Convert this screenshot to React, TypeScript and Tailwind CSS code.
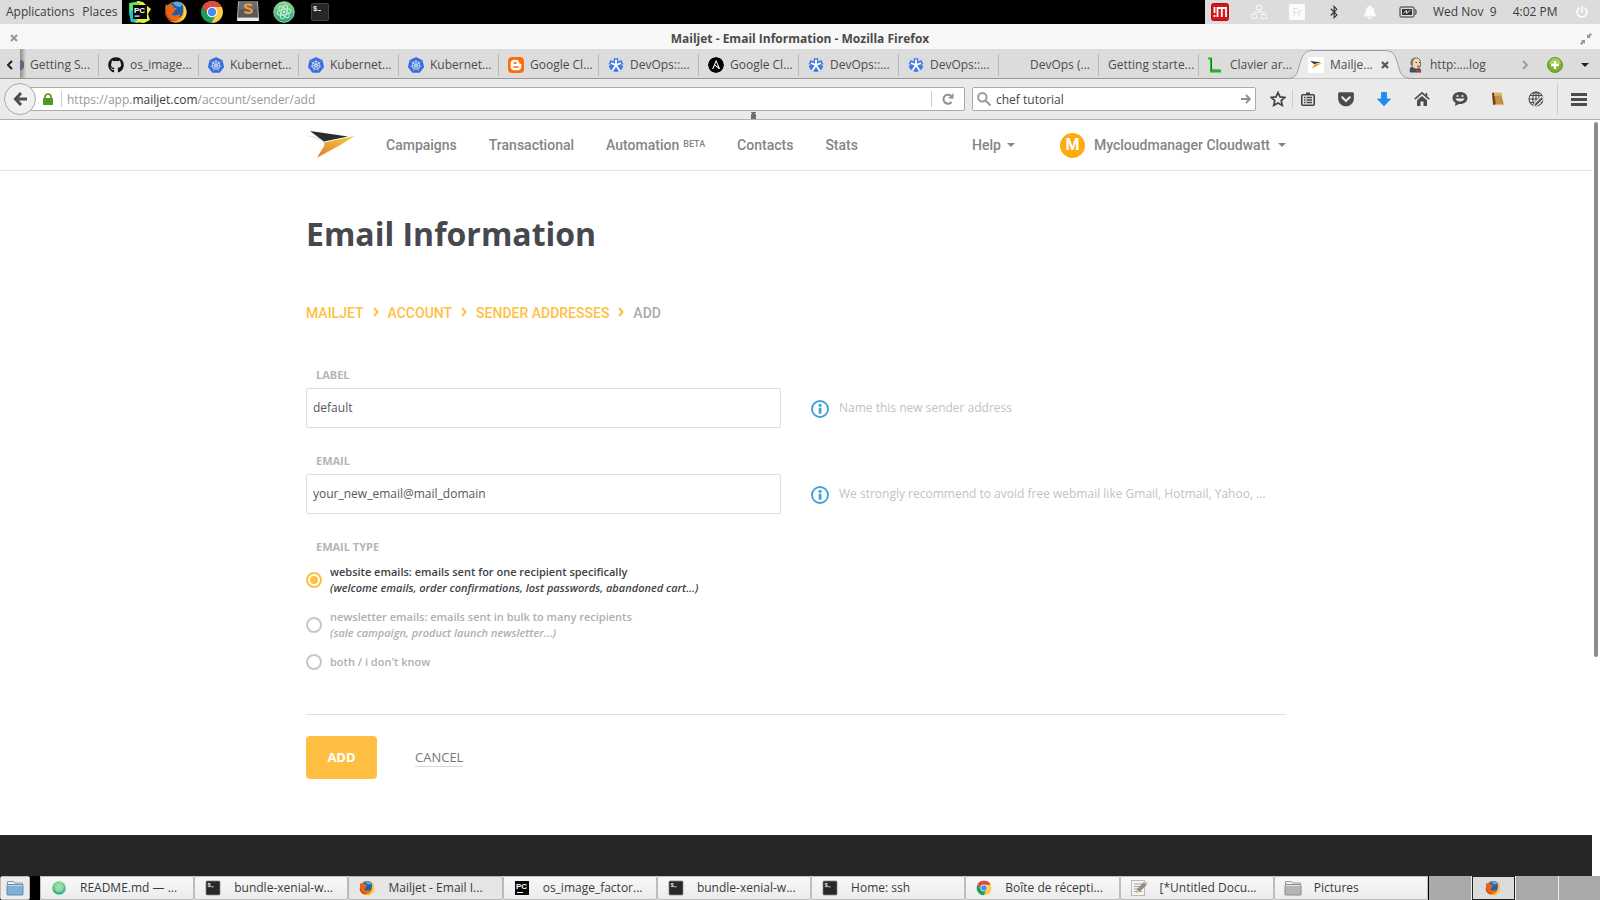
import React, { useState } from "react";
import type { ReactNode } from "react";
import { FaBell, FaBluetoothB, FaGetPocket, FaGithub, FaPowerOff } from "react-icons/fa";
import { SiAnsible, SiBlogger, SiKubernetes } from "react-icons/si";

type IconProps = { className?: string };

function PyCharmIcon({ className = "size-6" }: IconProps) {
  return (
    <svg viewBox="0 0 24 24" className={className} aria-hidden="true">
      <path d="M1 3 12 1l2 4-4 18-7-1-2-9z" fill="#21d789" />
      <path d="M9 1l6 1 3 3 5 4-3 5 2 6-6 3-9-1z" fill="#e8ee3c" />
      <path d="M1 9l5-5 3 17-6 1z" fill="#12c6c9" />
      <path d="M2 3h10l-3 5-7 3z" fill="#6be34b" />
      <rect x="5" y="5" width="14" height="14" fill="#050505" />
      <text x="6" y="13" fontSize="8" fontWeight="700" fill="#fff" fontFamily="Liberation Sans, sans-serif">PC</text>
      <rect x="6.500" y="15.500" width="5" height="1.200" fill="#fff" />
    </svg>
  );
}

function FirefoxIcon({ className = "size-6" }: IconProps) {
  return (
    <svg viewBox="0 0 24 24" className={className} aria-hidden="true">
      <circle cx="12" cy="12" r="10.500" fill="#e8701a" />
      <circle cx="13" cy="9.500" r="8" fill="#1c5fae" />
      <path d="M9 3c3-2 8-1.500 10 1l-3 3-4-1z" fill="#5aa9e0" />
      <path d="M18 3c5 3 6.500 11 2 16-4 4.500-12 5-16 0 5 3 11 1.500 13.500-2.500 2-3.500 2.500-8 .5-13.500z" fill="#fbb51c" />
      <path d="M20 6c3 5 2 12-3 15 3-4 4-9 3-15z" fill="#fde35a" />
      <path d="M2 4c1 1 2 1.500 4 1.500C8 5 9 5.500 9.500 6.500 9 7.500 11 8 12.500 8c.5 1.500-1.500 2-2.500 3 .5 2-1.500 2-2 3 1 2 4 2 6 .8 1.500-.8 3 .5 1.500 1.700-3 3-8 3-11 0C1.500 13.500.5 8.500 2 4z" fill="#e5661b" />
      <path d="M2 10c0 7 6 12 13 10-5 3-13 1-14-7z" fill="#c93716" />
    </svg>
  );
}

function ChromeIcon({ className = "size-6" }: IconProps) {
  return (
    <svg viewBox="0 0 24 24" className={className} aria-hidden="true">
      <path d="M12 12 2.470 6.500A11 11 0 0 1 21.530 6.500z" fill="#dd4b3e" />
      <path d="M12 12V7h9.800A11 11 0 0 1 11.500 23z" fill="#ffcd42" />
      <path d="M12 12l4.300 2.500L11.500 23A11 11 0 0 1 2.470 6.500L7.700 14.500z" fill="#17a05e" />
      <path d="M2.470 6.500 7.700 14.500 12 7h9.800A11 11 0 0 0 2.470 6.500z" fill="#dd4b3e" />
      <circle cx="12" cy="12" r="5.200" fill="#fff" />
      <circle cx="12" cy="12" r="4.200" fill="#4d87ed" />
    </svg>
  );
}

function SublimeIcon() {
  return (
    <svg viewBox="0 0 24 24" className="size-6" aria-hidden="true">
      <path d="M2 1.500h20l1 19H1z" fill="#c6c6c6" />
      <rect x="1" y="18" width="22" height="3" rx="1" fill="#ededed" />
      <path d="M3 1h18l1 16.500H2z" fill="#5a5a5a" />
      <path d="M3 1h18l.5 8h-19z" fill="#6c6c6c" />
      <path d="M16 5.500C13.500 4 9 4 9 6.300c0 2.500 7 1.900 7 4.500 0 2.400-4.500 2.600-7.500.9" fill="none" stroke="#f29a3c" strokeWidth="2.200" />
    </svg>
  );
}

function AtomIcon({ className = "size-6" }: IconProps) {
  return (
    <svg viewBox="0 0 24 24" className={className} aria-hidden="true">
      <defs>
        <linearGradient id="atomFill" x1="0" y1="0" x2="0" y2="1">
          <stop offset="0" stopColor="#8bd688" />
          <stop offset="1" stopColor="#1fa678" />
        </linearGradient>
      </defs>
      <circle cx="12" cy="12" r="10.300" fill="url(#atomFill)" stroke="#b9ead0" strokeWidth="0.800" />
      <g fill="none" stroke="#c4efd2" strokeWidth="1">
        <ellipse cx="12" cy="12" rx="7" ry="2.800" transform="rotate(-12 12 12)" />
        <ellipse cx="12" cy="12" rx="7" ry="2.800" transform="rotate(48 12 12)" />
        <ellipse cx="12" cy="12" rx="7" ry="2.800" transform="rotate(108 12 12)" />
      </g>
      <circle cx="12" cy="12" r="1" fill="#fff" />
    </svg>
  );
}

function TerminalIcon({ className = "size-5" }: IconProps) {
  return (
    <svg viewBox="0 0 20 20" className={className} aria-hidden="true">
      <rect x="1.500" y="1.500" width="17" height="17" rx="1" fill="#272727" stroke="#454545" />
      <text x="3" y="8.500" fontSize="7" fontWeight="700" fill="#eee" fontFamily="Liberation Mono, monospace">$</text>
      <path d="M7.500 8.500h3.500" stroke="#ddd" />
    </svg>
  );
}

function PyCharmSquare() {
  return (
    <svg viewBox="0 0 14 14" className="size-3.5" aria-hidden="true">
      <rect width="14" height="14" fill="#080808" />
      <text x="1" y="8" fontSize="8" fontWeight="700" fill="#fff" fontFamily="Liberation Sans, sans-serif">PC</text>
      <path d="M2 11.500h6" stroke="#fff" />
    </svg>
  );
}

function FolderIcon({ blue = false }: { blue?: boolean }) {
  return (
    <svg viewBox="0 0 18 16" className="h-4 w-4.5" aria-hidden="true">
      <path d="M1.500 3V1.500h6L9 3h7.500v3h-15z" fill="#eee" stroke="#999" />
      <rect x="1" y="4.500" width="16" height="10.500" rx="0.500" fill={blue ? "#7fb0d8" : "#b5b5b5"} stroke={blue ? "#5f8db5" : "#8b8b8b"} />
      <path d="M1.500 5.500h15" stroke={blue ? "#b8d6ee" : "#e2e2e2"} />
    </svg>
  );
}

function NoteIcon() {
  return (
    <svg viewBox="0 0 18 18" className="size-4.5" aria-hidden="true">
      <rect x="1.500" y="1.500" width="13" height="15" fill="#f4f4f4" stroke="#b9b9b9" />
      <path d="M4 5h8M4 7.500h6M4 10h4M4 12.500h8" stroke="#a5a5a5" />
      <path d="M6 14l1-4 7-7 3 2.500-7 7z" fill="#8d8d8d" />
      <path d="M6 14l1-3.500 2.500 2.300z" fill="#e7d56a" />
      <path d="M13.500 3.500 15 2l3 2.500-1.500 1.500z" fill="#e7b9c5" />
    </svg>
  );
}

function HelmStar() {
  return (
    <svg viewBox="0 0 16 16" className="size-4" aria-hidden="true">
      <path d="M8 1.200v13.600M1.600 5l12.800 6M14.400 5 1.600 11" stroke="#4178e8" strokeWidth="4.600" />
      <path d="M8 2.500V8M8 8 3 6.200M8 8l5-1.800M8 8l-3 4.700M8 8l3 4.700" stroke="#fff" strokeWidth="1.800" />
    </svg>
  );
}

function MailjetMark({ className }: IconProps) {
  return (
    <svg viewBox="0 0 50 30" className={className} aria-hidden="true">
      <defs>
        <linearGradient id="wing" x1="1" y1="0" x2="0.200" y2="1">
          <stop offset="0" stopColor="#f7cf35" />
          <stop offset="0.500" stopColor="#f0a936" />
          <stop offset="1" stopColor="#e07f2c" />
        </linearGradient>
      </defs>
      <path d="M0 5.500 14 7l5 5z" fill="#e6e3df" />
      <path d="M10 29 40 12 20 21z" fill="#f6d9b8" />
      <path d="M4 1 42 6.500 18 11.500z" fill="#292c2c" />
      <path d="M49 6 18 12.500l.5 3L11 27.500 34 15z" fill="url(#wing)" />
    </svg>
  );
}

function MailjetFavicon() {
  return (
    <span className="flex size-4 shrink-0 items-center justify-center bg-white">
      <MailjetMark className="h-2.5 w-3.5" />
    </span>
  );
}

function ButlerIcon() {
  return (
    <svg viewBox="0 0 16 16" className="size-4" aria-hidden="true">
      <path d="M2 15.500c-1-4 0-6 3-5.500l6 1c2 .5 2.500 2.500 2 4.500z" fill="#3d5266" />
      <path d="M3.500 5c0-5.500 9-5.500 9 0v3c0 4.500-7 5.500-8.500 1z" fill="#f0d6b7" stroke="#4c4039" strokeWidth="0.700" />
      <path d="M3 8.500C1.500 4 3.500.5 8 1 5.500 2.200 4.700 4 5 8z" fill="#85705f" />
      <path d="M7.500 5.500H9M11 5.500h1M9 9.200h2.500" stroke="#3b322c" strokeWidth="0.900" />
      <path d="m8 12.500 2.500 1L13 12.500v3l-2.500-1-2.500 1z" fill="#cf3134" />
    </svg>
  );
}

function ClavierIcon() {
  return (
    <svg viewBox="0 0 16 16" className="size-4" aria-hidden="true">
      <path d="M0 1.500h4M3 1v13.500h9v-2" fill="none" stroke="#12c312" strokeWidth="2" />
      <path d="M3.500 1.500V13H11" fill="none" stroke="#0a780a" />
    </svg>
  );
}

function RestoreArrows() {
  return (
    <svg viewBox="0 0 12 12" className="size-3" aria-hidden="true">
      <path d="M7 1v4h4L9.800 3.800 12 1.600 10.400 0 8.200 2.200zM5 11V7H1l1.200 1.200L0 10.400 1.600 12l2.200-2.200z" fill="#999" />
    </svg>
  );
}

function Caret({ className }: IconProps) {
  return (
    <svg viewBox="0 0 8 4" className={className ?? "h-1 w-2"} aria-hidden="true">
      <path d="M0 0h8L4 4z" fill="currentColor" />
    </svg>
  );
}

function TopPanel() {
  return (
    <header className="flex h-6 items-stretch bg-black text-[12px] leading-6 text-[#3c3c3c]">
      <nav className="flex w-[122px] gap-2 bg-[#dcdcdc] pl-1.5">
        <button type="button">Applications</button>
        <button type="button">Places</button>
      </nav>
      <div className="flex flex-1 items-center gap-3 pl-1.5">
        <button type="button" aria-label="PyCharm"><PyCharmIcon /></button>
        <button type="button" aria-label="Firefox"><FirefoxIcon /></button>
        <button type="button" aria-label="Chrome"><ChromeIcon /></button>
        <button type="button" aria-label="Sublime Text"><SublimeIcon /></button>
        <button type="button" aria-label="Atom"><AtomIcon /></button>
        <button type="button" aria-label="Terminal" className="ml-0.5"><TerminalIcon /></button>
      </div>
      <div className="flex w-[395px] items-center gap-4 bg-[#dcdcdc] pr-3">
        <div className="flex w-[212px] items-center justify-between pl-1.5">
          <svg viewBox="0 0 18 18" className="size-4.5" aria-hidden="true">
            <rect x="0.500" y="0.500" width="17" height="17" rx="2" fill="#d5171b" stroke="#b50f12" />
            <path d="M3.500 4v6M3.500 12v2M6.500 14V5h8.500v9M10.800 5v9" fill="none" stroke="#fff" strokeWidth="1.800" />
          </svg>
          <svg viewBox="0 0 16 14" className="h-3.5 w-4" fill="none" stroke="#f7f7f7" aria-label="Network">
            <path d="M5.500.5h5v4h-5zM.5 9.500h5v4h-5zM10.500 9.500h5v4h-5zM8 4.500V7M3 9.500V7h10v2.500" />
          </svg>
          <span className="flex size-4 items-center justify-center rounded-xs bg-[#fbfbfb] text-[10px] text-[#dcdcdc]">Fr</span>
          <FaBluetoothB className="size-3.5 text-[#333]" />
          <FaBell className="size-3.5 text-[#fbfbfb]" />
          <svg viewBox="0 0 17 12" className="h-3 w-4.5" aria-label="Battery">
            <rect x="0.500" y="1" width="14" height="10" rx="1" fill="none" stroke="#333" />
            <rect x="2.500" y="3" width="10" height="6" fill="#333" />
            <path d="M15 4h1.500v4H15" fill="none" stroke="#333" />
            <path d="M4 7.500 7 4v3.500L11 4" fill="none" stroke="#dcdcdc" />
          </svg>
        </div>
        <span className="whitespace-pre">Wed Nov  9</span>
        <span className="flex-1">4:02 PM</span>
        <FaPowerOff className="size-3 text-[#fbfbfb]" />
      </div>
    </header>
  );
}

function TitleBar() {
  return (
    <div className="flex h-[25px] items-center bg-[#f7f7f7] px-2 text-[12px]">
      <button type="button" aria-label="Close window" className="p-0.5 pt-1">
        <svg viewBox="0 0 8 8" className="size-2" aria-hidden="true">
          <path d="m1 1 6 6M7 1 1 7" stroke="#999" strokeWidth="2.200" />
        </svg>
      </button>
      <h2 className="flex-1 pt-1 text-center font-bold text-[#4a4a4a]">Mailjet - Email Information - Mozilla Firefox</h2>
      <button type="button" aria-label="Restore window" className="pt-1"><RestoreArrows /></button>
    </div>
  );
}

const kube = <SiKubernetes className="size-4 text-[#326ce5]" />;

const tabs: { label: string; icon: ReactNode | null }[] = [
  { label: "os_image...", icon: <FaGithub className="size-4 text-[#161616]" /> },
  { label: "Kubernet...", icon: kube },
  { label: "Kubernet...", icon: kube },
  { label: "Kubernet...", icon: kube },
  { label: "Google Cl...", icon: <SiBlogger className="size-4 rounded-sm bg-white text-[#ff6a0a]" /> },
  { label: "DevOps::...", icon: <HelmStar /> },
  { label: "Google Cl...", icon: <SiAnsible className="size-4 rounded-full bg-white text-black" /> },
  { label: "DevOps::...", icon: <HelmStar /> },
  { label: "DevOps::...", icon: <HelmStar /> },
  { label: "DevOps (...", icon: <span className="size-4" /> },
  { label: "Getting starte...", icon: null },
  { label: "Clavier ar...", icon: <ClavierIcon /> },
];

function TabStrip() {
  return (
    <div className="flex h-[30px] items-stretch border-b border-[#999] bg-[#dcdcdc] text-[12px] text-[#4c4c4c]">
      <button type="button" aria-label="Scroll tabs left" className="flex w-5 items-center justify-center pt-0.5">
        <svg viewBox="0 0 6 10" className="h-2.5 w-1.5" fill="none" stroke="#222" strokeWidth="2" aria-hidden="true">
          <path d="M5 1 1 5l4 4" />
        </svg>
      </button>
      <button type="button" className="flex w-[78px] items-center gap-1.5 bg-linear-to-r from-[#8d8d8d] to-[#dcdcdc] to-8% pt-0.5 whitespace-nowrap">
        <span className="h-2.5 w-1 rounded-r-full border-r border-[#c43a3a] bg-[#4b6a9c]" />
        {"Getting S..."}
      </button>
      {tabs.map((tab, i) => (
        <div key={i} className="flex w-[100px] items-center pt-0.5">
          <span className="h-[22px] w-px bg-[#b7b7b7]" />
          <button type="button" className="flex items-center gap-1.5 pl-[9px] whitespace-nowrap">
            {tab.icon}
            {tab.label}
          </button>
        </div>
      ))}
      <div className="relative flex w-[100px] items-center pt-0.5">
        <svg viewBox="0 0 124 29" className="absolute top-px -left-2.5 h-[29px] w-[124px]" aria-hidden="true">
          <path d="M0 28.500C8 28 9 24 11 17 14 5 17 .5 24 .5h73c8 0 10 4 13 14 2 9 4 14 14 14z" fill="#ebebeb" />
          <path d="M0 28.500C8 28 9 24 11 17 14 5 17 .5 24 .5h73c8 0 10 4 13 14 2 9 4 14 14 14" fill="none" stroke="#97a0a8" />
        </svg>
        <div className="relative flex flex-1 items-center gap-1.5 pl-2.5">
          <MailjetFavicon />
          <span>Mailje...</span>
          <button type="button" aria-label="Close tab" className="ml-0.5">
            <svg viewBox="0 0 8 8" className="size-2" aria-hidden="true">
              <path d="m1 1 6 6M7 1 1 7" stroke="#555" strokeWidth="2.200" />
            </svg>
          </button>
        </div>
      </div>
      <button type="button" className="flex w-[100px] items-center gap-1.5 pt-0.5 pl-2.5">
        <ButlerIcon />
        {"http:....log"}
      </button>
      <div className="flex flex-1 items-center justify-between pt-0.5 pr-[11px] pl-6">
        <button type="button" aria-label="Scroll tabs right">
          <svg viewBox="0 0 6 10" className="h-2.5 w-1.5" fill="none" stroke="#999" strokeWidth="1.800" aria-hidden="true">
            <path d="m1 1 4 4-4 4" />
          </svg>
        </button>
        <button type="button" aria-label="New tab">
          <svg viewBox="0 0 16 16" className="size-4" aria-hidden="true">
            <circle cx="8" cy="8" r="7.400" fill="#7db32b" stroke="#5d8a17" />
            <path d="M2 7a6 6 0 0 1 12 0z" fill="#a3cf55" />
            <path d="M8 4v8M4 8h8" stroke="#fff" strokeWidth="2.400" />
          </svg>
        </button>
        <button type="button" aria-label="List all tabs" className="text-[#222]"><Caret /></button>
      </div>
    </div>
  );
}

function ToolButton({ label, children }: { label: string; children: ReactNode }) {
  return (
    <button type="button" aria-label={label} className="flex w-[38px] items-center justify-center">
      {children}
    </button>
  );
}

function Toolbar() {
  return (
    <div className="relative flex h-[41px] items-center border-b border-[#b0b0b0] bg-[#eaeaea] pl-1 text-[12px] text-[#444]">
      <button type="button" aria-label="Back" className="z-10 flex size-8 items-center justify-center rounded-full border border-[#aaa] bg-[#f0f0f0]">
        <svg viewBox="0 0 14 14" className="size-3.5" fill="none" stroke="#4f4f4f" strokeWidth="3" aria-hidden="true">
          <path d="M8 1 2.500 7 8 13M3 7h11" />
        </svg>
      </button>
      <form className="-ml-4 flex h-6 flex-1 items-center rounded-xs border border-[#aaa] bg-white pl-[22px]">
        <svg viewBox="0 0 10 12" className="h-3 w-2.5" aria-label="Secure">
          <path d="M2 6V4a3 3 0 0 1 6 0v2" fill="none" stroke="#4c9a20" strokeWidth="1.700" />
          <rect y="5" width="10" height="7" rx="0.800" fill="#4c9a20" />
        </svg>
        <span className="mr-[5px] ml-2 h-4 w-px bg-[#ccc]" />
        <span className="flex-1 pt-px text-[#999]">
          https://app.<span className="text-[#3a3a3a]">mailjet.com</span>/account/sender/add
        </span>
        <span className="h-4 w-px bg-[#ccc]" />
        <button type="button" aria-label="Reload" className="flex w-8 justify-center">
          <svg viewBox="0 0 12 12" className="size-3" aria-hidden="true">
            <path d="M9.500 9A4.500 4.500 0 1 1 9 2.800" fill="none" stroke="#8a929b" strokeWidth="2" />
            <path d="M11.500 0v5.500H6z" fill="#8a929b" />
          </svg>
        </button>
      </form>
      <form className="ml-[7px] flex h-6 w-[284px] items-center rounded-xs border border-[#aaa] bg-white px-1">
        <svg viewBox="0 0 14 14" className="size-3.5 shrink-0" fill="none" stroke="#999" strokeWidth="2" aria-hidden="true">
          <circle cx="5.300" cy="5.300" r="4.200" />
          <path d="m8.500 8.500 5 5" />
        </svg>
        <input aria-label="Search" defaultValue="chef tutorial" className="ml-[5px] min-w-0 flex-1 pt-px outline-none" />
        <button type="button" aria-label="Go">
          <svg viewBox="0 0 10 10" className="size-2.5" fill="none" stroke="#8a929b" strokeWidth="1.800" aria-hidden="true">
            <path d="M0 5h8M5 1l4 4-4 4" />
          </svg>
        </button>
      </form>
      <div className="ml-1 flex h-10 items-center">
        <button type="button" aria-label="Bookmark" className="flex w-8 items-center justify-center pl-1">
          <svg viewBox="0 0 16 16" className="size-4" fill="none" stroke="#444" strokeWidth="1.700" aria-hidden="true">
            <path d="m8 1.500 2 4.400 4.800.5-3.600 3.200 1.100 4.800L8 12l-4.300 2.400 1.100-4.800L1.200 6.400 6 5.900z" />
          </svg>
        </button>
        <span className="-mr-1 h-4.5 w-px bg-[#ccc]" />
        <ToolButton label="Bookmarks list">
          <svg viewBox="0 0 14 14" className="size-3.5" aria-hidden="true">
            <path d="M5 .5h4v2H5z" fill="#444" />
            <rect x="0.800" y="2.800" width="12.400" height="10.400" rx="1" fill="none" stroke="#444" strokeWidth="1.600" />
            <path d="M3 5.500h1.500M3 8h1.500M3 10.500h1.500M5.500 5.500H11M5.500 8H11M5.500 10.500H11" stroke="#444" strokeWidth="1.300" />
          </svg>
        </ToolButton>
        <ToolButton label="Pocket"><FaGetPocket className="size-4.5 text-[#4c4c4c]" /></ToolButton>
        <ToolButton label="Downloads">
          <svg viewBox="0 0 14 14" className="size-3.5" aria-hidden="true">
            <path d="M4.500.5h5V7h4L7 13.800.5 7h4z" fill="#1b8df7" stroke="#0f76dc" strokeWidth="0.700" />
          </svg>
        </ToolButton>
        <ToolButton label="Home">
          <svg viewBox="0 0 16 16" className="size-4" aria-hidden="true">
            <path d="M.8 8.200 8 1.800l7.200 6.400M12.500 2v3" fill="none" stroke="#4c4c4c" strokeWidth="1.600" />
            <path d="M3 9.300 8 5l5 4.300V15H9.500v-4.500h-3V15H3z" fill="#4c4c4c" />
          </svg>
        </ToolButton>
        <ToolButton label="Chat">
          <svg viewBox="0 0 16 16" className="size-4" aria-hidden="true">
            <path d="M8 1c4.500 0 7.500 2.600 7.500 6S12.500 13 8 13l-1-.1L3 15l.5-3.200C1.600 10.700.5 9 .5 7 .5 3.600 3.500 1 8 1z" fill="#4c4c4c" />
            <circle cx="5.500" cy="5" r="1.100" fill="#ebebeb" />
            <circle cx="10.500" cy="5" r="1.100" fill="#ebebeb" />
            <path d="M3.500 7.500h9c-1 4-8 4-9 0z" fill="#ebebeb" />
          </svg>
        </ToolButton>
        <ToolButton label="Library">
          <svg viewBox="0 0 14 14" className="size-3.5" aria-hidden="true">
            <path d="M1 1h9l3 12H3z" fill="#c49140" />
            <path d="M1 1l2-.5L5 13H2z" fill="#6b4619" />
            <path d="M3 .5h7.500l.5 3-7.500.5z" fill="#dbb46b" />
            <path d="M3 13h10" stroke="#e7dcc4" />
          </svg>
        </ToolButton>
        <ToolButton label="Web tools">
          <svg viewBox="0 0 16 16" className="size-4" fill="none" stroke="#4c4c4c" strokeWidth="1.100" aria-hidden="true">
            <circle cx="8" cy="8" r="7" />
            <ellipse cx="8" cy="8" rx="3.200" ry="7" />
            <path d="M8 1v14M1 8h14M2 4.500h12M2 11.500h12" />
            <path d="m6.500 12.500 7-7 2.500 2-7 7-3.500 1.500z" fill="#4c4c4c" stroke="#ebebeb" />
          </svg>
        </ToolButton>
        <span className="ml-0.5 h-8 w-px bg-[#ccc]" />
        <button type="button" aria-label="Menu" className="flex w-[42px] items-center justify-center">
          <svg viewBox="0 0 16 13" className="h-[13px] w-4" stroke="#4c4c4c" strokeWidth="2.800" aria-hidden="true">
            <path d="M0 1.500h16M0 6.500h16M0 11.500h16" />
          </svg>
        </button>
      </div>
      <svg viewBox="0 0 5 7" className="absolute bottom-0 left-[751px] h-[7px] w-[5px]" aria-hidden="true">
        <path d="M0 0h5v1H4v1h1v5H0V2h1V1H0z" fill="#6f6f6f" />
      </svg>
    </div>
  );
}

function SiteHeader() {
  return (
    <header className="border-b border-[#e2e2e2]">
      <div className="mx-auto flex h-[50px] max-w-[980px] items-center font-[Roboto,sans-serif] text-[14px] font-medium text-[#858585]">
        <a href="#home" aria-label="Mailjet home"><MailjetMark className="h-[30px] w-[50px]" /></a>
        <nav className="ml-[30px] flex flex-1 gap-8">
          <a href="#campaigns">Campaigns</a>
          <a href="#transactional">Transactional</a>
          <a href="#automation" className="flex gap-1">
            Automation <span className="text-[9px] leading-[18px]">BETA</span>
          </a>
          <a href="#contacts">Contacts</a>
          <a href="#stats">Stats</a>
        </nav>
        <button type="button" className="mr-[45px] flex items-center gap-1.5">Help <Caret /></button>
        <button type="button" className="flex items-center gap-2">
          <span className="mr-px flex size-[25px] items-center justify-center rounded-full bg-[#ffab0f] text-[16px] font-bold text-white">M</span>
          Mycloudmanager Cloudwatt <Caret />
        </button>
      </div>
    </header>
  );
}

function Chevron() {
  return (
    <svg viewBox="0 0 6 10" className="mb-0.5 h-2.5 w-1.5" fill="none" stroke="#ffbf42" strokeWidth="2" aria-hidden="true">
      <path d="m1 1 3.500 4L1 9" />
    </svg>
  );
}

function InfoIcon() {
  return (
    <svg viewBox="0 0 18 18" className="mt-0.5 size-4.5 shrink-0" aria-hidden="true">
      <circle cx="9" cy="9" r="8" fill="none" stroke="#43a0dc" strokeWidth="1.900" />
      <rect x="7.700" y="7.700" width="2.800" height="6" fill="#43a0dc" />
      <circle cx="9.100" cy="5.300" r="1.600" fill="#43a0dc" />
    </svg>
  );
}

function Field({ id, label, value, hint }: { id: string; label: string; value: string; hint: string }) {
  return (
    <div className="mb-[25px]">
      <label htmlFor={id} className="mb-[5px] block pl-2.5 text-[11px] leading-4 font-bold text-[#b3b5b9]">{label}</label>
      <div className="flex items-center gap-[30px]">
        <input
          id={id}
          defaultValue={value}
          aria-describedby={`${id}-hint`}
          className="h-10 w-[475px] rounded-xs border border-[#dedfe3] bg-white px-1.5 pb-0.5 text-[12px] text-[#55585d] outline-none"
        />
        <p id={`${id}-hint`} className="flex items-center gap-2.5 text-[12px] text-[#c0c2c5]">
          <InfoIcon />
          {hint}
        </p>
      </div>
    </div>
  );
}

const emailTypes = [
  {
    id: "website",
    title: "website emails: emails sent for one recipient specifically",
    note: "(welcome emails, order confirmations, lost passwords, abandoned cart...)",
  },
  {
    id: "newsletter",
    title: "newsletter emails: emails sent in bulk to many recipients",
    note: "(sale campaign, product launch newsletter...)",
  },
  { id: "both", title: "both / i don't know", note: "" },
];

function SenderForm() {
  const [type, setType] = useState("website");
  return (
    <form className="mt-11">
      <Field id="label" label="LABEL" value="default" hint="Name this new sender address" />
      <Field id="email" label="EMAIL" value="your_new_email@mail_domain" hint="We strongly recommend to avoid free webmail like Gmail, Hotmail, Yahoo, ..." />
      <fieldset>
        <legend className="mb-[9px] pl-2.5 text-[11px] leading-4 font-bold text-[#b3b5b9]">EMAIL TYPE</legend>
        <div className="flex flex-col gap-[13px]">
          {emailTypes.map((option) => (
            <label
              key={option.id}
              htmlFor={option.id}
              className="flex items-center gap-2 text-[11px] leading-4 font-semibold text-[#adafb3] has-checked:text-[#3f4146]"
            >
              <input
                type="radio"
                name="emailType"
                id={option.id}
                checked={type === option.id}
                onChange={() => setType(option.id)}
                className="size-4 appearance-none rounded-full border-2 border-[#c6c7cb] bg-white bg-clip-content p-0.5 checked:border-[#ffbf42] checked:bg-[#ffbf42]"
              />
              <span>
                {option.title}
                {option.note && <em className="block">{option.note}</em>}
              </span>
            </label>
          ))}
        </div>
      </fieldset>
      <div className="mt-11 mb-14 flex items-center gap-[38px] border-t border-[#e0e0e0] pt-[21px] text-[13px]">
        <button type="submit" className="h-[43px] w-[71px] rounded-sm bg-[#ffbf42] font-bold text-white">ADD</button>
        <a href="#cancel" className="border-b border-[#d8d8d8] leading-[18px] text-[#75777b]">CANCEL</a>
      </div>
    </form>
  );
}

function MailjetPage() {
  return (
    <div className="flex flex-1 bg-white">
      <div className="flex flex-1 flex-col">
        <SiteHeader />
        <main className="mx-auto w-full max-w-[980px] flex-1 pt-[43px]">
          <h1 className="text-[32px] leading-10 font-bold text-[#46484e]">Email Information</h1>
          <nav aria-label="Breadcrumb" className="mt-[49px] flex items-center gap-[9px] font-[Roboto,sans-serif] text-[14px] leading-5 font-medium text-[#ffbf42]">
            <a href="#mailjet">MAILJET</a>
            <Chevron />
            <a href="#account">ACCOUNT</a>
            <Chevron />
            <a href="#senders">SENDER ADDRESSES</a>
            <Chevron />
            <span className="text-[#a9abae]">ADD</span>
          </nav>
          <SenderForm />
        </main>
        <footer className="h-[41px] bg-[#252727]" />
      </div>
      <div className="flex w-2 justify-center pt-0.5" aria-hidden="true">
        <span className="h-[71%] w-1 rounded-full bg-[#8c8c8c]" />
      </div>
    </div>
  );
}

const windows: { title: string; icon: ReactNode; active?: boolean }[] = [
  { title: "README.md — ...", icon: <AtomIcon className="size-4" /> },
  { title: "bundle-xenial-w...", icon: <TerminalIcon className="size-4" /> },
  { title: "Mailjet - Email I...", icon: <FirefoxIcon className="size-4" />, active: true },
  { title: "os_image_factor...", icon: <PyCharmSquare /> },
  { title: "bundle-xenial-w...", icon: <TerminalIcon className="size-4" /> },
  { title: "Home: ssh", icon: <TerminalIcon className="size-4" /> },
  { title: "Boîte de récepti...", icon: <ChromeIcon className="size-4" /> },
  { title: "[*Untitled Docu...", icon: <NoteIcon /> },
  { title: "Pictures", icon: <FolderIcon /> },
];

function Taskbar() {
  return (
    <footer className="flex h-6 items-stretch bg-black text-[12px] text-[#3a3a3a]">
      <button type="button" aria-label="Show desktop" className="mr-2.5 flex w-[30px] items-center justify-center rounded-xs border border-[#bbb] bg-[#ececec]">
        <FolderIcon blue />
      </button>
      <div className="flex flex-1 bg-[#ddd]">
        {windows.map((w, i) => (
          <button
            key={i}
            type="button"
            className={
              w.active
                ? "flex flex-1 items-center gap-3 rounded-xs border border-[#b5b5b5] bg-[#e6e6e6] pl-[9px] whitespace-nowrap"
                : "flex flex-1 items-center gap-3 rounded-xs border border-[#bdbdbd] bg-linear-to-b from-[#f8f8f8] to-[#ececec] pl-[9px] whitespace-nowrap"
            }
          >
            <span className="flex w-[18px] justify-center">{w.icon}</span>
            {w.title}
          </button>
        ))}
      </div>
      <div className="ml-px flex w-[171px] gap-px bg-[#eee]">
        <button type="button" aria-label="Workspace 1" className="flex-1 bg-[#aaa]" />
        <button type="button" aria-label="Workspace 2" className="flex flex-1 items-center justify-center border border-[#222] bg-[#dcdcdc]">
          <FirefoxIcon className="size-4" />
        </button>
        <button type="button" aria-label="Workspace 3" className="flex-1 bg-[#aaa]" />
        <button type="button" aria-label="Workspace 4" className="flex-1 bg-[#aaa]" />
      </div>
    </footer>
  );
}

export default function App() {
  return (
    <div className="flex min-h-screen flex-col font-['Open_Sans','Noto_Sans',sans-serif]">
      <TopPanel />
      <TitleBar />
      <TabStrip />
      <Toolbar />
      <MailjetPage />
      <Taskbar />
    </div>
  );
}
